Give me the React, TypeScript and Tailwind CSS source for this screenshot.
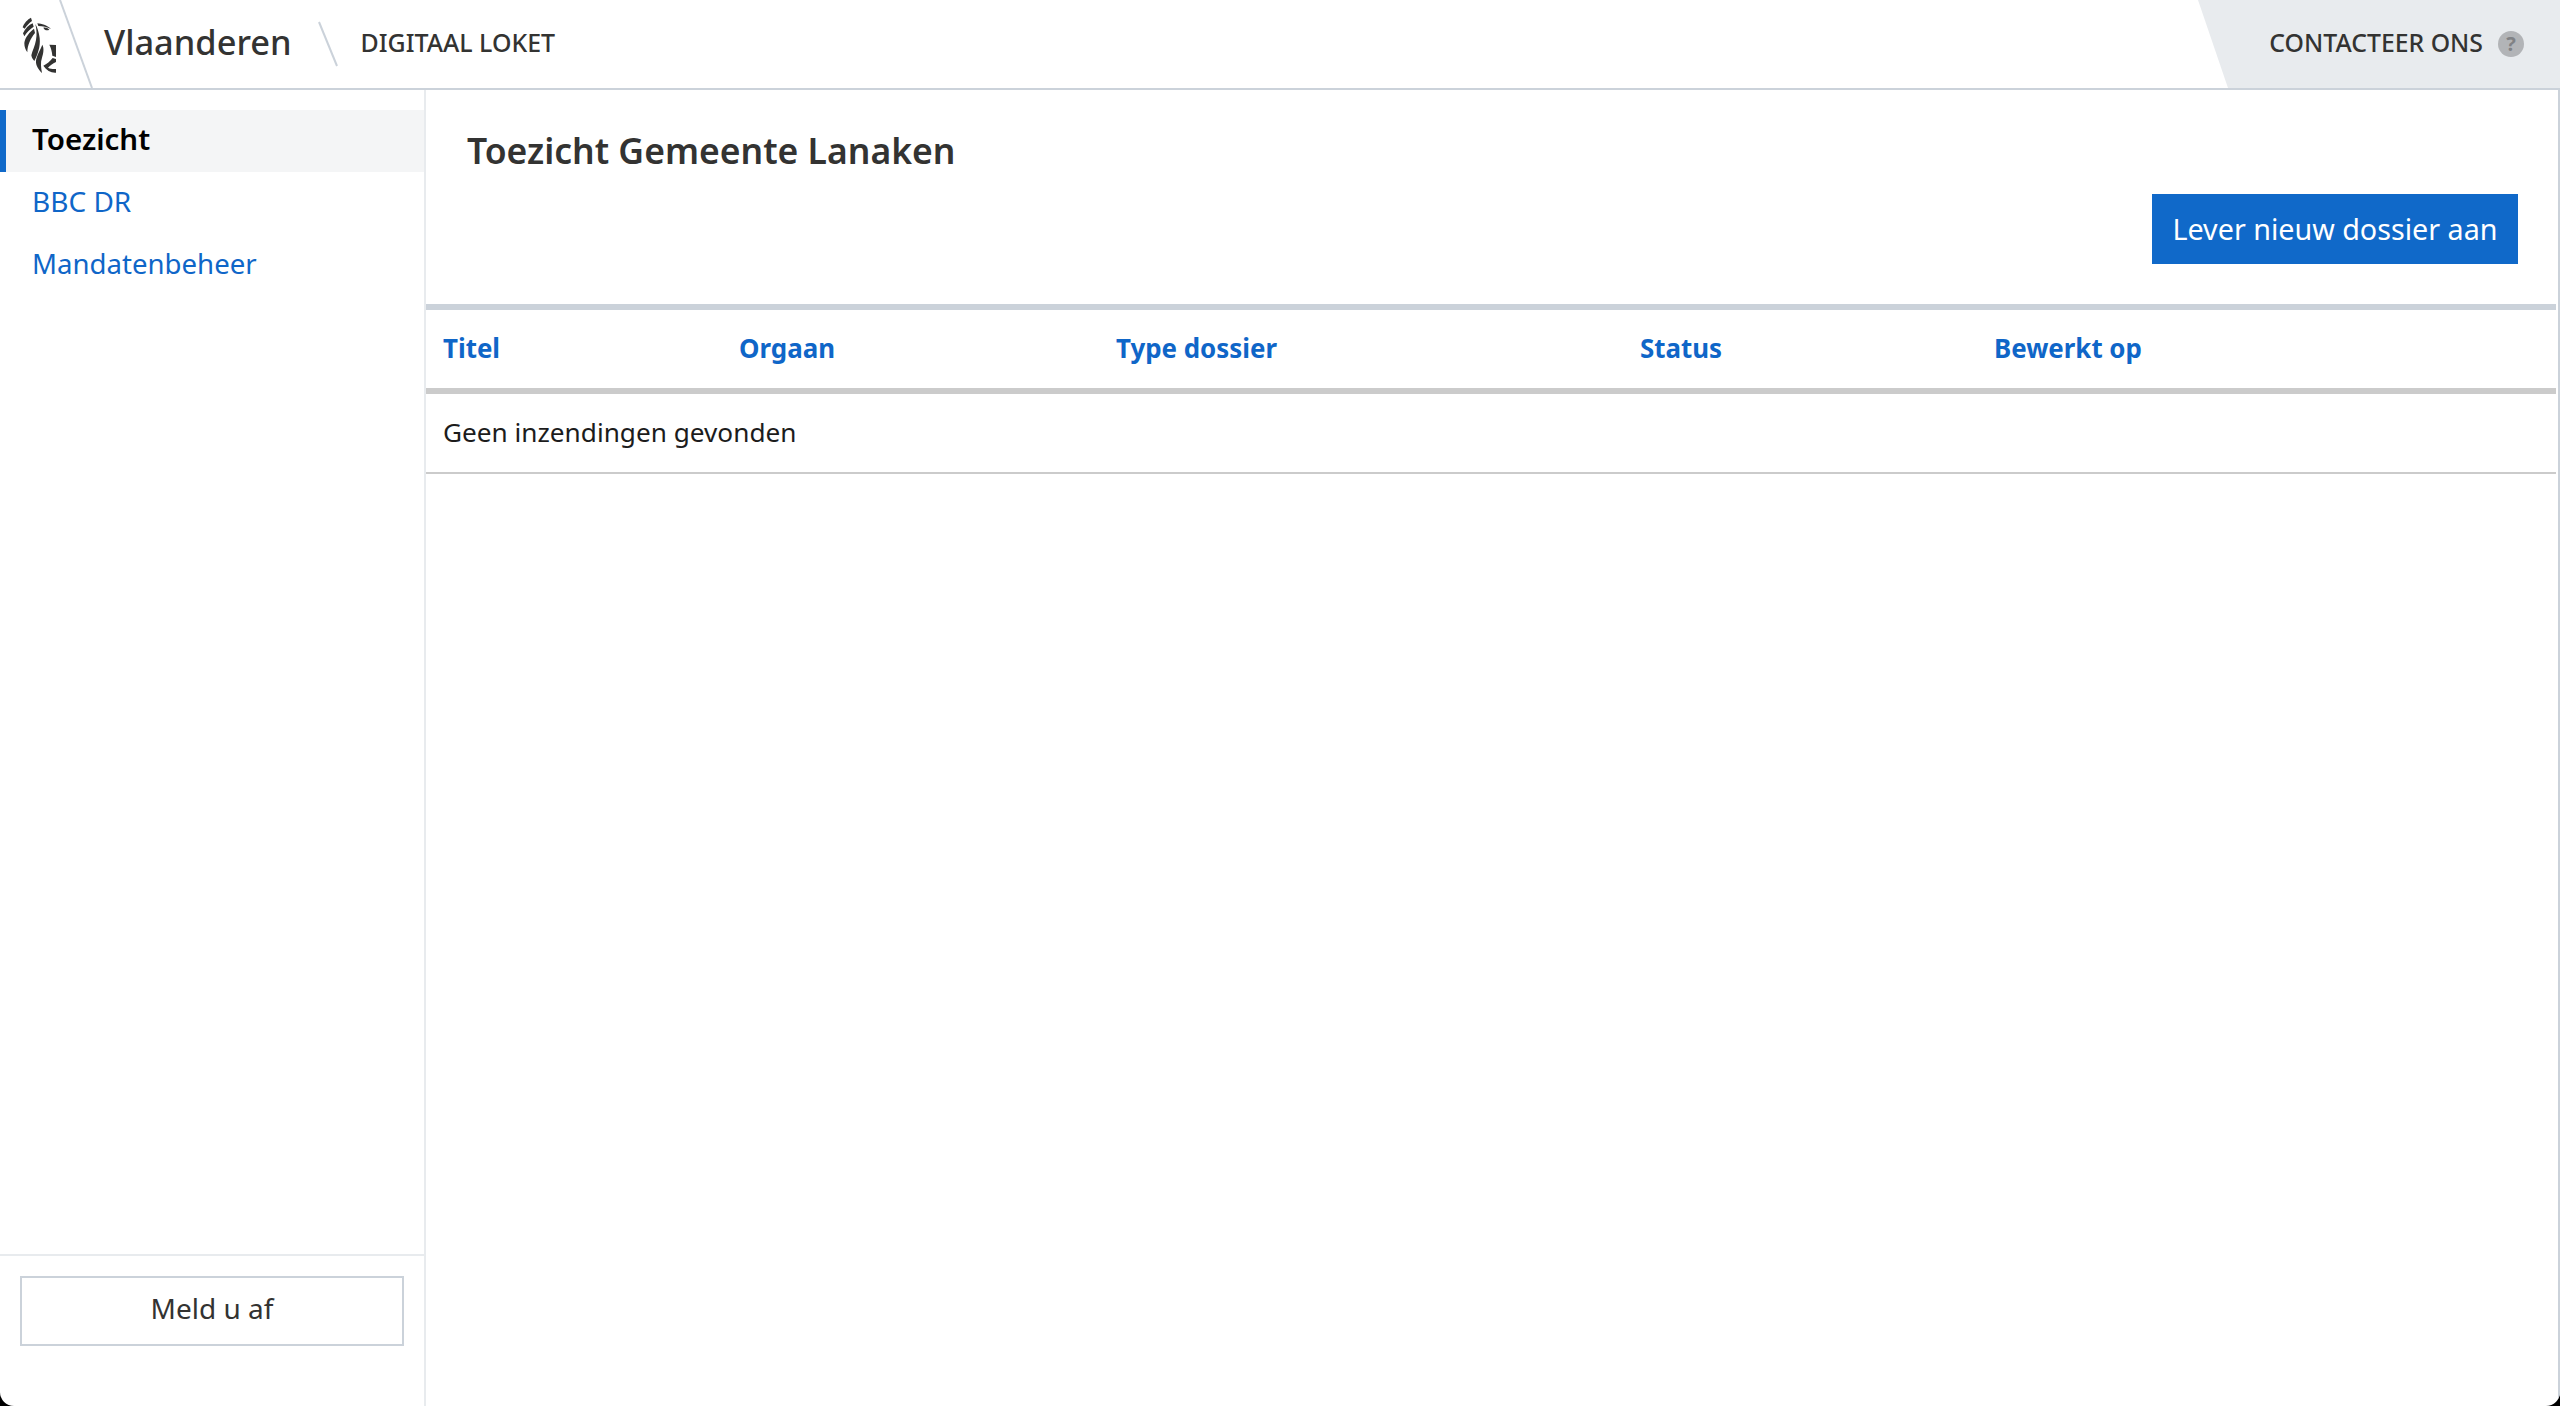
export default function App() {
  const font = "font-['Noto_Sans',sans-serif]";
  return (
    <div className={`h-[1406px] w-[2560px] overflow-hidden bg-black ${font}`}>
      <div className="flex h-full flex-col overflow-hidden rounded-b-[14px] bg-white">
        <header className="relative flex h-[90px] shrink-0 items-center border-b-2 border-[#cbd2da]">
          <svg className="absolute left-0 top-0" width="100" height="88" viewBox="0 0 100 88">
            <line x1="60" y1="0" x2="92" y2="88" stroke="#cbd2da" strokeWidth="2" />
            <g transform="translate(15 12) scale(0.3333)" fill="#333332">
              <path d="M48 17 C38 22 27 33 23 46 L29 50 C35 41 43 33 51 27Z" />
              <path d="M53 34 C42 39 30 50 24 64 L28 73 C35 61 45 51 56 44Z" />
              <path d="M57 50 C45 59 30 76 28 93 C28 104 31 113 37 121 C37 100 47 79 60 63Z" />
              <path d="M61 36 C65 52 66 68 63 84 C60 102 52 116 49 130 C50 137 54 143 58 147 C67 129 77 105 74 78 C72 62 67 46 61 36Z" />
              <path d="M82 98 C77 112 65 130 63 146 C62 160 70 172 81 183 C78 167 76 151 81 137 C85 124 88 109 82 98Z" />
              <path d="M67 34 C80 36 96 39 108 51 C97 45 83 43 70 42Z" />
              <path d="M85 47 C91 45 98 48 103 53 C96 57 89 55 85 47Z" />
              <path d="M103 98 L123 99 L123 135 L112 131 C111 119 108 107 103 98Z" />
              <path d="M85 161 C95 157 106 147 113 138 L123 141 L123 150 C113 155 104 161 99 167 C107 171 115 172 123 171 L123 182 C108 183 95 176 85 161Z" />
            </g>
          </svg>
          <span className="ml-[104px] pb-[3px] text-[34.4px] font-medium leading-none text-[#333332]">Vlaanderen</span>
          <svg className="ml-[26px]" width="20" height="46" viewBox="0 0 20 46">
            <line x1="1" y1="1" x2="19" y2="45" stroke="#cbd2da" strokeWidth="2" />
          </svg>
          <span className="ml-[23px] pb-[3px] text-[24.9px] font-medium leading-none text-[#333332]">DIGITAAL LOKET</span>
          <div className="ml-auto flex h-full w-[362px] items-center justify-end bg-[#e8ebee] pr-[36px] [clip-path:polygon(0_0,100%_0,100%_100%,30px_100%)]">
            <span className="pb-[3px] text-[24.8px] font-medium leading-none text-[#333332]">CONTACTEER ONS</span>
            <span className="ml-[15px] flex h-[26px] w-[26px] items-center justify-center rounded-full bg-[#b2b4b7] text-[20px] font-bold leading-none text-[#808285]">?</span>
          </div>
        </header>

        <div className="flex min-h-0 flex-1">
          <aside className="flex w-[426px] shrink-0 flex-col border-r-2 border-[#e8ebee]">
            <nav className="flex flex-1 flex-col pt-[20px] text-[28px]">
              <a className="flex h-[62px] items-center border-l-[6px] border-[#1069c9] bg-[#f4f5f6] pb-[3px] pl-[26px] text-[29.5px] font-semibold text-black">Toezicht</a>
              <a className="flex h-[62px] items-center pb-[4px] pl-[32px] text-[#0f66c8]">BBC DR</a>
              <a className="flex h-[62px] items-center pb-[3px] pl-[32px] text-[27.6px] text-[#0f66c8]">Mandatenbeheer</a>
            </nav>
            <div className="h-[152px] border-t-2 border-[#e8ebee] px-[20px] pt-[20px]">
              <button className="flex h-[70px] w-[384px] items-center justify-center border-2 border-[#cbd2da] bg-white pb-[6px] text-[28px] text-[#333332]">Meld u af</button>
            </div>
          </aside>

          <main className="flex min-w-0 flex-1 flex-col border-r-2 border-[#cbd2da]">
            <div className="relative h-[214px] shrink-0">
              <h1 className="pl-[41px] pt-[38px] text-[35.5px] font-semibold leading-[44px] text-[#333332]">Toezicht Gemeente Lanaken</h1>
              <div className="absolute right-[40px] top-[104px]">
                <button className="flex h-[70px] w-[366px] items-center justify-center bg-[#1069c9] text-[28.7px] text-white">Lever nieuw dossier aan</button>
              </div>
            </div>
            <div className="mr-[2px] border-t-[6px] border-[#cbd2da]">
              <div className="grid h-[78px] grid-cols-[296px_377px_524px_354px_1fr] items-center pb-[2px] pl-[17px] text-[25.9px] font-bold text-[#0f66c8]">
                <span>Titel</span>
                <span>Orgaan</span>
                <span>Type dossier</span>
                <span>Status</span>
                <span>Bewerkt op</span>
              </div>
              <div className="flex h-[84px] items-center border-t-[6px] border-[#cbcbcb] pl-[17px] text-[26.2px] text-[#1c1c1c]">Geen inzendingen gevonden</div>
              <div className="h-[2px] bg-[#cbcbcb]" />
            </div>
          </main>
        </div>
      </div>
    </div>
  );
}
